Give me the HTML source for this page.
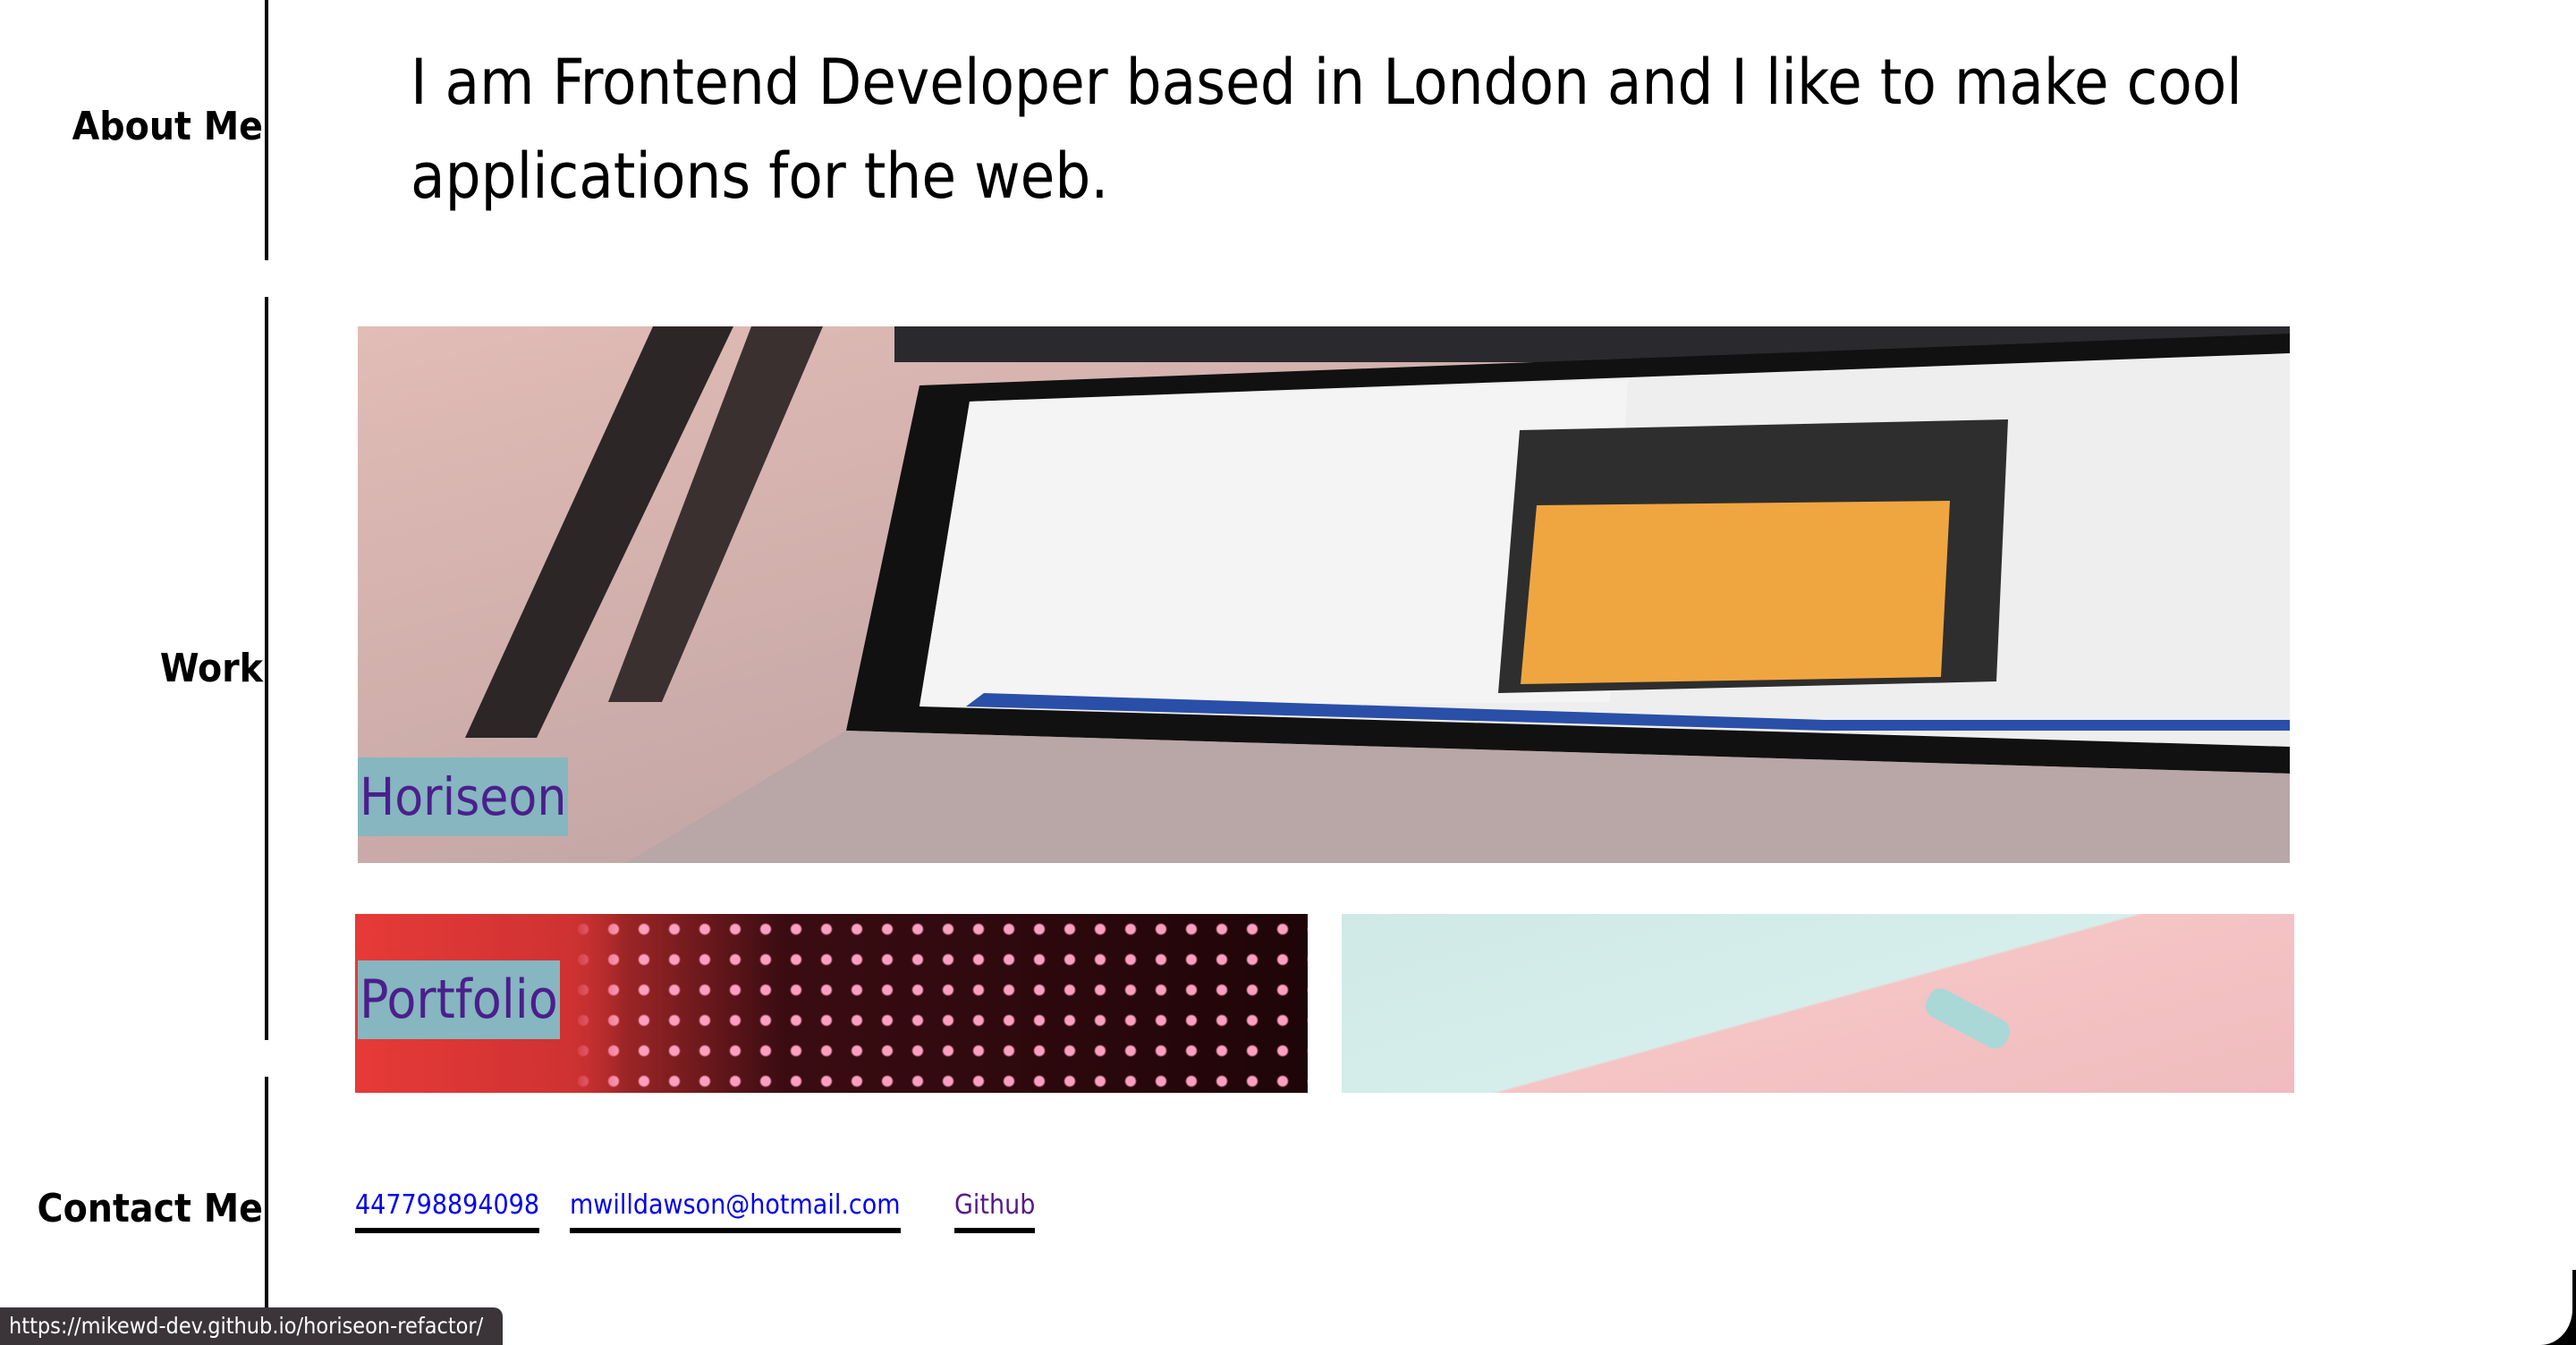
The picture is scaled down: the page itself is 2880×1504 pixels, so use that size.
<!DOCTYPE html>
<html><head><meta charset="utf-8"><style>
*{margin:0;padding:0;box-sizing:border-box}
html,body{width:2880px;height:1504px;overflow:hidden;background:#fff;font-family:"DejaVu Sans Condensed","Liberation Sans",sans-serif}
.vl{position:absolute;left:296px;width:4px;background:#000}
.lbl{position:absolute;right:2586px;font-weight:bold;font-size:44px;color:#000;white-space:nowrap}
.p{position:absolute;left:459px;top:40px;font-size:70px;line-height:105px;color:#000;width:2250px}
.tag{position:absolute;background:#86b6c0;color:#4b1f8c;font-size:58px;line-height:88px;padding:0 2px;white-space:nowrap}
.a{position:absolute;top:1330px;font-size:30px;color:#0000ee;text-decoration:none;border-bottom:6px solid #000;padding-bottom:8px;white-space:nowrap}
</style></head><body>
<div class="vl" style="top:0;height:291px"></div>
<div class="vl" style="top:332px;height:831px"></div>
<div class="vl" style="top:1204px;height:300px"></div>
<div class="lbl" style="top:116px">About Me</div>
<div class="lbl" style="top:722px">Work</div>
<div class="lbl" style="top:1326px">Contact Me</div>
<div class="p">I am Frontend Developer based in London and I like to make cool applications for the web.</div>

<svg style="position:absolute;left:400px;top:365px" width="2160" height="600" viewBox="0 0 2160 600">
<defs><linearGradient id="bg" x1="0" y1="0" x2="1" y2="1"><stop offset="0" stop-color="#e2bcb6"/><stop offset="0.5" stop-color="#c9aaa8"/><stop offset="1" stop-color="#a89c9e"/></linearGradient></defs>
<rect width="2160" height="600" fill="url(#bg)"/>
<rect x="600" y="0" width="1560" height="40" fill="#2a2a2e"/>
<polygon points="330,0 420,0 200,460 120,460" fill="#2c2626"/>
<polygon points="440,0 520,0 340,420 280,420" fill="#3a3030"/>
<polygon points="628,66 2160,8 2160,500 546,452" fill="#111"/>
<polygon points="684,84 2160,30 2160,470 628,425" fill="#eeeeee"/>
<polygon points="684,84 1420,60 1400,420 628,425" fill="#f4f4f4"/>
<polygon points="1299,116 1845,104 1832,397 1275,410" fill="#2e2e2e"/>
<polygon points="1318,200 1780,195 1770,392 1300,400" fill="#f0a640"/>
<polygon points="546,452 2160,500 2160,600 300,600" fill="#b9a6a6"/>
<rect x="1640" y="440" width="520" height="12" fill="#2a4fa8"/>
<polygon points="700,410 1640,440 1640,452 680,425" fill="#2a4fa8"/>
</svg>
<div class="tag" style="left:400px;top:847px">Horiseon</div>

<div style="position:absolute;left:397px;top:1022px;width:1065px;height:200px;background:radial-gradient(circle,#ff9fc0 0 5px,transparent 7px) 0 0/34px 34px,linear-gradient(90deg,#e43a3a 0%,#b02a2a 25%,#3a0c12 45%,#1e0508 100%)"></div>
<div style="position:absolute;left:397px;top:1022px;width:300px;height:200px;background:linear-gradient(90deg,#e63a38,#cf3232 80%,rgba(180,40,40,0))"></div>
<div class="tag" style="left:400px;top:1074px;font-size:60px">Portfolio</div>

<div style="position:absolute;left:1500px;top:1022px;width:1065px;height:200px;background:linear-gradient(164.5deg,#cfe9e6 0%,#d6eeeb 49.7%,#f5c4c5 50.3%,#f0bcbf 100%)"></div>
<div style="position:absolute;left:2150px;top:1122px;width:100px;height:34px;background:#a9d8d6;border-radius:14px;transform:rotate(28deg)"></div>

<a class="a" style="left:397px">447798894098</a>
<a class="a" style="left:637px">mwilldawson@hotmail.com</a>
<a class="a" style="left:1067px;color:#551a8b">Github</a>

<div style="position:absolute;left:0;top:1462px;width:562px;height:42px;background:#3b3539;border-radius:0 10px 0 0;color:#fff;font-size:25px;line-height:42px;padding-left:10px">https://mikewd-dev.github.io/horiseon-refactor/</div>
<div style="position:absolute;right:0;top:1460px;width:40px;height:44px;background:#000"></div>
<div style="position:absolute;right:0;top:1420px;width:80px;height:84px;background:#fff;border-radius:0 0 40px 0;border-right:4px solid #000"></div>
</body></html>
